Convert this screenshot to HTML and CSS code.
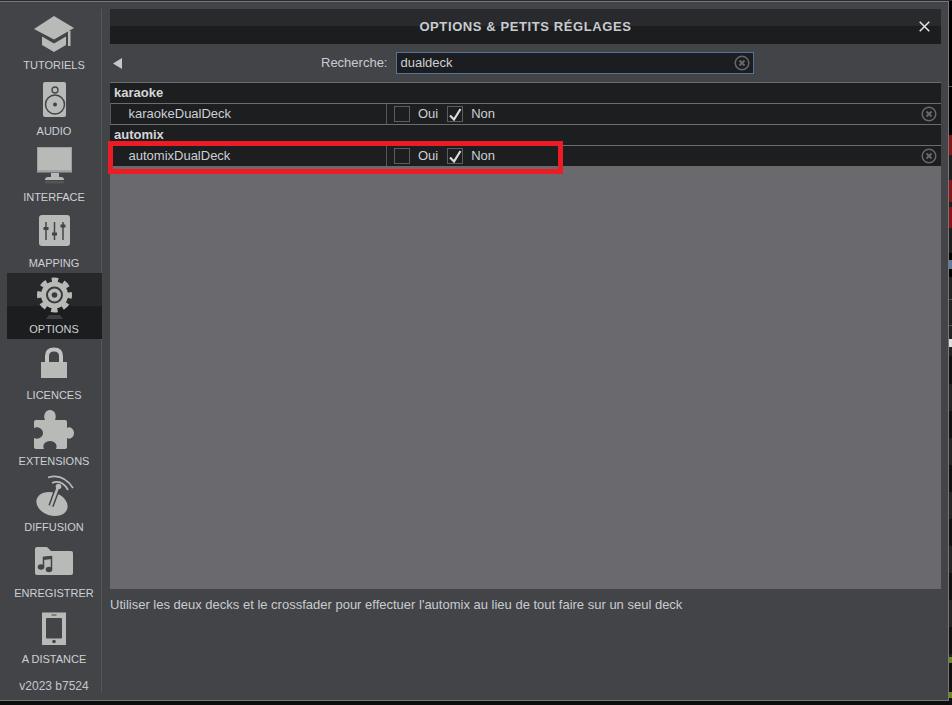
FILE: index.html
```html
<!DOCTYPE html>
<html lang="fr">
<head>
<meta charset="utf-8">
<title>Options</title>
<link rel="stylesheet" href="styles.css">
</head>
<body>
<div class="topline"></div>
<div class="stage">
  <div class="window">
    <nav class="sidebar">
      <div class="nav-item">
        <svg class="nav-icon" viewBox="7 9 95 50"><path class="ic" d="M34 29 54 16 74 28 54 39.500Z"/><path class="ic" d="M42 36.500 54 43.500 66 36.500V45L54 52 42 45Z"/><rect class="ic" x="68" y="31" width="2.500" height="15"/></svg>
        <span class="nav-label">TUTORIELS</span>
      </div>
      <div class="nav-item">
        <svg class="nav-icon" viewBox="7 75 95 50"><rect class="ic" x="43" y="82" width="23" height="35" rx="2"/><circle class="ring" cx="55" cy="90" r="3" stroke-width="1.300"/><circle class="ring" cx="55" cy="104.500" r="9.500" stroke-width="1.500"/><circle class="hole" cx="55" cy="104.500" r="2"/></svg>
        <span class="nav-label">AUDIO</span>
      </div>
      <div class="nav-item">
        <svg class="nav-icon" viewBox="7 141 95 50"><rect class="ic-dim" x="37" y="147" width="35" height="25.500"/><rect class="ic" x="38" y="148" width="33" height="22"/><rect class="ic" x="51" y="173" width="8" height="4"/><path class="ic" d="M45 180Q45 177 48 177H61Q64 177 64 180Z"/><rect class="ic-fade" x="45" y="181" width="19" height="2.500"/></svg>
        <span class="nav-label">INTERFACE</span>
      </div>
      <div class="nav-item">
        <svg class="nav-icon" viewBox="7 207 95 50"><rect class="ic" x="39" y="215" width="31" height="31" rx="3"/><path class="slider" d="M46 222V240M54.500 222V240M63 222V240"/><path class="knob" d="M43.500 228.500H48.500M52 234H57M60.500 226H65.500"/></svg>
        <span class="nav-label">MAPPING</span>
      </div>
      <div class="nav-item active">
        <svg class="nav-icon" viewBox="7 273 95 50"><circle class="ic" cx="54.500" cy="295" r="13.500"/><circle class="teeth" cx="54.500" cy="295" r="14.500"/><circle class="ring-gear" cx="54.500" cy="295" r="7.500"/><circle class="hole-gear" cx="54.500" cy="295" r="2.800"/><path class="ic-fade" d="M46 319 49 315H60L63 319Z"/></svg>
        <span class="nav-label">OPTIONS</span>
      </div>
      <div class="nav-item">
        <svg class="nav-icon" viewBox="7 339 95 50"><path class="shackle" d="M47 364V356Q47 349.500 54 349.500T61 356V364"/><path class="ic" d="M41 362H67V378H41Z"/></svg>
        <span class="nav-label">LICENCES</span>
      </div>
      <div class="nav-item">
        <svg class="nav-icon" viewBox="7 405 95 50"><path class="ic" d="M36 420H45C43 416 45 410 50 410 55 410 57 416 55 420H65Q67 420 67 422V428C70 426 74 429 74 433 74 437 70 440 67 438V447Q67 449 65 449H56C58 445 55 441 50 441 45 441 42 445 44 449H36Q34 449 34 447V438C38 440 43 437 43 433 43 429 38 426 34 428V422Q34 420 36 420Z"/></svg>
        <span class="nav-label">EXTENSIONS</span>
      </div>
      <div class="nav-item">
        <svg class="nav-icon" viewBox="7 471 95 50"><ellipse class="ic" cx="52" cy="504" rx="16" ry="11.500" transform="rotate(18 52 504)"/><path class="mast-out" d="M51 506 58 487"/><path class="mast" d="M51 506 58 487"/><circle class="ic" cx="58.500" cy="486.500" r="2.800"/><path class="wave" d="M48 477.500Q63 473 73 488"/><path class="wave" d="M52 483Q62 479 68 490"/></svg>
        <span class="nav-label">DIFFUSION</span>
      </div>
      <div class="nav-item">
        <svg class="nav-icon" viewBox="7 537 95 50"><path class="ic" d="M37 547H47L51 551H71Q73 551 73 553V573Q73 575 71 575H37Q35 575 35 573V549Q35 547 37 547Z"/><ellipse class="hole" cx="41" cy="567" rx="3.300" ry="2.700"/><ellipse class="hole" cx="49" cy="569.500" rx="3.300" ry="2.700"/><path class="note" d="M43.500 567V557.500L51.500 556.500V569"/><path class="beam" d="M43.500 558.500 51.500 557.500"/></svg>
        <span class="nav-label">ENREGISTRER</span>
      </div>
      <div class="nav-item">
        <svg class="nav-icon" viewBox="7 603 95 50"><rect class="ic" x="42" y="612.500" width="24" height="32.500"/><rect class="hole" x="46" y="618" width="16" height="20.500" rx="1"/><rect class="hole" x="51.500" y="614.500" width="5" height="1"/><circle class="hole" cx="54" cy="641.500" r="1.800"/></svg>
        <span class="nav-label">A DISTANCE</span>
      </div>
      <div class="version">v2023 b7524</div>
    </nav>
    <main class="main">
      <header class="title-bar">
        <h1 class="title">OPTIONS &amp; PETITS RÉGLAGES</h1>
        <svg class="close" viewBox="0 0 11 11"><path d="M.7.7 10.300 10.300M10.300.7.7 10.300"/></svg>
      </header>
      <div class="search-row">
        <svg class="back" viewBox="0 0 9 11"><path d="M9 0V11L0 5.500Z"/></svg>
        <label class="search-label">Recherche:</label>
        <div class="search-box">
          <span class="search-value">dualdeck</span>
          <svg class="clear" viewBox="0 0 16 16"><circle cx="8" cy="8" r="6.800"/><path d="M5.500 5.500 10.500 10.500M10.500 5.500 5.500 10.500"/></svg>
        </div>
      </div>
      <div class="list">
        <div class="group">karaoke</div>
        <div class="row">
          <div class="name">karaokeDualDeck</div>
          <div class="value">
            <span class="box"></span><span class="opt opt-oui">Oui</span>
            <span class="box"><svg class="check" viewBox="0 0 16 16"><path d="M3 9.500 7 13.500 13.500 3"/></svg></span><span class="opt">Non</span>
          </div>
          <svg class="clear" viewBox="0 0 16 16"><circle cx="8" cy="8" r="6.800"/><path d="M5.500 5.500 10.500 10.500M10.500 5.500 5.500 10.500"/></svg>
        </div>
        <div class="group">automix</div>
        <div class="row">
          <div class="name">automixDualDeck</div>
          <div class="value">
            <span class="box"></span><span class="opt opt-oui">Oui</span>
            <span class="box"><svg class="check" viewBox="0 0 16 16"><path d="M3 9.500 7 13.500 13.500 3"/></svg></span><span class="opt">Non</span>
          </div>
          <svg class="clear" viewBox="0 0 16 16"><circle cx="8" cy="8" r="6.800"/><path d="M5.500 5.500 10.500 10.500M10.500 5.500 5.500 10.500"/></svg>
        </div>
        <div class="highlight"></div>
      </div>
      <p class="description">Utiliser les deux decks et le crossfader pour effectuer l'automix au lieu de tout faire sur un seul deck</p>
    </main>
  </div>
  <div class="strip"></div>
</div>
<div class="bottom"></div>
</body>
</html>
```
FILE: styles.css
```css
* { box-sizing: border-box; }
html, body { margin: 0; padding: 0; }
body {
  width: 952px;
  height: 705px;
  overflow: hidden;
  background: #0e0e0f;
  font-family: "Liberation Sans", Arial, sans-serif;
  color: #ccd0d4;
}
.topline { height: 1px; background: #2a2a2c; }
.stage { display: flex; height: 700px; }
.window {
  width: 949px;
  height: 700px;
  display: flex;
  padding: 7px 7px 7px 7px;
  background: #434448;
  border: 1px solid #77787a;
  border-left: 0;
}
.strip {
  width: 3px;
  background: linear-gradient(to bottom,
    #000 0 85px, #555 85px 86px, #000 86px 134px,
    #8a1219 134px 154px, #1e1e1e 154px 179px,
    #8a1219 179px 201px, #1e1e1e 201px 206px,
    #8a1219 206px 227px, #1e1e1e 227px 252px,
    #000 252px 259px, #5a7fa0 259px 268px, #000 268px 276px,
    #222 276px 298px, #555 298px 299px, #222 299px 324px,
    #555 324px 325px, #222 325px 338px, #ddd 338px 346px,
    #222 346px 355px, #111 355px 383px, #242424 383px 410px,
    #111 410px 437px, #242424 437px 464px, #111 464px 491px,
    #242424 491px 518px, #111 518px 545px, #242424 545px 572px,
    #111 572px 599px, #242424 599px 626px, #111 626px 653px,
    #242424 653px 656px, #6e8a1e 656px 662px, #111 662px 691px,
    #6e8a1e 691px 697px, #111 697px);
}
.bottom { height: 4px; }

/* sidebar */
.sidebar {
  width: 95px;
  height: 684px;
  flex: none;
  display: flex;
  flex-direction: column;
  border-right: 1px solid #55565a;
}
.nav-item {
  height: 66px;
  margin-right: -1px;
  flex: none;
  display: flex;
  flex-direction: column;
  align-items: center;
}
.nav-item.active {
  background: linear-gradient(to bottom, #272829 0 33px, #1c1d1e 33px);
}
.nav-icon { display: block; width: 95px; height: 50px; flex: none; }
.nav-label {
  margin-right: 1px;
  font-size: 11px;
  line-height: 13px;
  color: #cdd1d5;
  white-space: nowrap;
}
.version {
  margin-top: 10px;
  font-size: 12px;
  line-height: 14px;
  text-align: center;
  color: #c4c8cc;
}
.ic { fill: #b8bab8; }
.ic-dim { fill: #9fa1a0; }
.ic-fade { fill: #6a6b6c; opacity: .45; }
.ring { fill: none; stroke: #434448; }
.hole { fill: #434448; }
.slider { stroke: #434448; stroke-width: 1.500; fill: none; }
.knob { stroke: #434448; stroke-width: 3; fill: none; }
.teeth { fill: none; stroke: #b8bab8; stroke-width: 6; stroke-dasharray: 6.200 5.190; stroke-dashoffset: 3.100; }
.ring-gear { fill: #b8bab8; stroke: #3a3b3c; stroke-width: 2; }
.hole-gear { fill: #3a3b3c; }
.shackle { fill: none; stroke: #c2c2c2; stroke-width: 4; }
.mast-out { stroke: #434448; stroke-width: 5.500; fill: none; }
.mast { stroke: #b8bab8; stroke-width: 2.500; fill: none; }
.wave { stroke: #b8bab8; stroke-width: 1.800; fill: none; }
.note { fill: none; stroke: #434448; stroke-width: 1.500; }
.beam { fill: none; stroke: #434448; stroke-width: 3; }

/* main */
.main {
  width: 831px;
  flex: none;
  margin-left: 8px;
  display: flex;
  flex-direction: column;
}
.title-bar {
  height: 35px;
  flex: none;
  position: relative;
  display: flex;
  align-items: center;
  justify-content: center;
  background: linear-gradient(to bottom, #292a2d 0 17px, #1c1d1f 17px);
}
.title {
  margin: 0;
  font-size: 13px;
  font-weight: bold;
  letter-spacing: .6px;
  color: #c8ccd0;
}
.close {
  position: absolute;
  right: 11px;
  top: 12px;
  width: 11px;
  height: 11px;
  fill: none;
  stroke: #e4e4e4;
  stroke-width: 1.500;
}
.search-row {
  height: 38px;
  flex: none;
  display: flex;
  align-items: center;
  padding-left: 3px;
}
.back { width: 9px; height: 11px; fill: #c6c8c8; flex: none; }
.search-label {
  margin-left: 199px;
  margin-bottom: 2px;
  font-size: 13px;
  color: #c8ccd0;
  white-space: nowrap;
}
.search-box {
  margin-left: 9px;
  width: 358px;
  height: 22px;
  display: flex;
  align-items: center;
  justify-content: space-between;
  padding: 0 3px 0 3px;
  background: #1c1d20;
  border: 1px solid #56749a;
}
.search-value { margin-bottom: 2px; font-size: 13px; color: #ccd0d4; }
.clear {
  width: 16px;
  height: 16px;
  flex: none;
  fill: none;
  stroke: #66686a;
  stroke-width: 1.500;
}
.clear path { stroke-width: 2; }
.list {
  position: relative;
  flex: none;
  height: 507px;
  background: #69696e;
}
.group {
  height: 21px;
  padding-left: 4px;
  font-size: 13px;
  font-weight: bold;
  line-height: 20px;
  background: #1d1e20;
  border-top: 1px solid #6b6c6e;
  color: #d4d6d8;
}
.row {
  height: 21px;
  display: flex;
  align-items: center;
  background: #1d1e20;
  border-top: 1px solid #6b6c6e;
  border-left: 1px solid #55565a;
  padding-right: 4px;
}
.name {
  width: 276px;
  height: 100%;
  flex: none;
  padding-left: 17.500px;
  font-size: 13px;
  line-height: 20px;
  border-right: 1px solid #55565a;
  color: #ccd0d4;
}
.value {
  flex: 1;
  display: flex;
  align-items: center;
  padding-left: 7px;
  font-size: 13px;
}
.box {
  position: relative;
  width: 16px;
  height: 16px;
  flex: none;
  border: 1px solid #5c5d5f;
}
.check {
  position: absolute;
  left: -1px;
  top: -1px;
  width: 16px;
  height: 16px;
  fill: none;
  stroke: #dcdcdc;
  stroke-width: 2.200;
}
.opt { margin-left: 8px; margin-bottom: 2px; color: #ccd0d4; }
.opt-oui { margin-right: 9px; }
.highlight {
  position: absolute;
  left: -2px;
  top: 59px;
  width: 455px;
  height: 33px;
  border: 5px solid #ed1c24;
}
.description {
  margin: 8px 0 0;
  font-size: 13px;
  line-height: 15px;
  color: #c8ccd0;
  white-space: nowrap;
}
```
